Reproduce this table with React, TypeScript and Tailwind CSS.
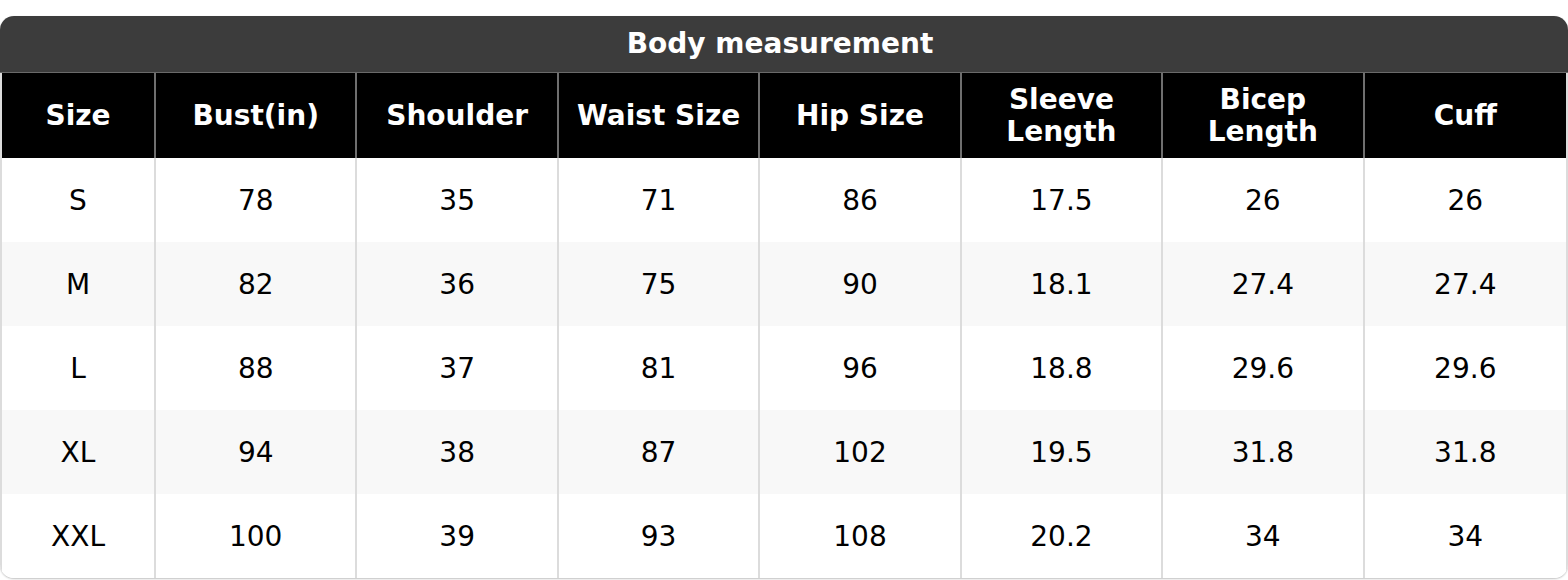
import React from "react";

const headers = ["Size", "Bust(in)", "Shoulder", "Waist Size", "Hip Size", "Sleeve Length", "Bicep Length", "Cuff"];
const rows = [
  ["S", "78", "35", "71", "86", "17.5", "26", "26"],
  ["M", "82", "36", "75", "90", "18.1", "27.4", "27.4"],
  ["L", "88", "37", "81", "96", "18.8", "29.6", "29.6"],
  ["XL", "94", "38", "87", "102", "19.5", "31.8", "31.8"],
  ["XXL", "100", "39", "93", "108", "20.2", "34", "34"],
];

export default function App() {
  return (
    <div className="w-[1568px] h-[580px] bg-white pt-4" style={{ fontFamily: '"DejaVu Sans", sans-serif' }}>
      <div className="rounded-[14px] overflow-hidden shadow-[0_1px_2px_rgba(0,0,0,0.25)]">
        <div className="h-[57px] bg-[#3c3c3c] border-b border-[#6a6a6a] flex items-center justify-center pr-2 text-white font-bold text-[28px] leading-none">
          Body measurement
        </div>
        <div className="grid grid-cols-[154px_repeat(7,1fr)] border-x-2 border-[#dcdcdc]">
          {headers.map((h, i) => (
            <div
              key={h}
              className={`h-[85px] pt-px bg-black text-white font-bold text-[28px] leading-[32px] flex items-center justify-center text-center px-2 border-[#6f6f6f] ${i < 7 ? "border-r-2" : ""}`}
            >
              {h.startsWith("Sleeve") || h.startsWith("Bicep") ? (
                <span>
                  {h.split(" ")[0]}
                  <br />
                  {h.split(" ")[1]}
                </span>
              ) : (
                h
              )}
            </div>
          ))}
          {rows.map((r, ri) =>
            r.map((c, ci) => (
              <div
                key={`${ri}-${ci}`}
                className={`h-[84px] pt-px flex items-center justify-center text-[28px] leading-none text-black border-[#dcdcdc] ${ci < 7 ? "border-r-2" : ""} ${ri % 2 === 1 ? "bg-[#f8f8f8]" : "bg-white"}`}
              >
                {c}
              </div>
            ))
          )}
        </div>
      </div>
    </div>
  );
}
